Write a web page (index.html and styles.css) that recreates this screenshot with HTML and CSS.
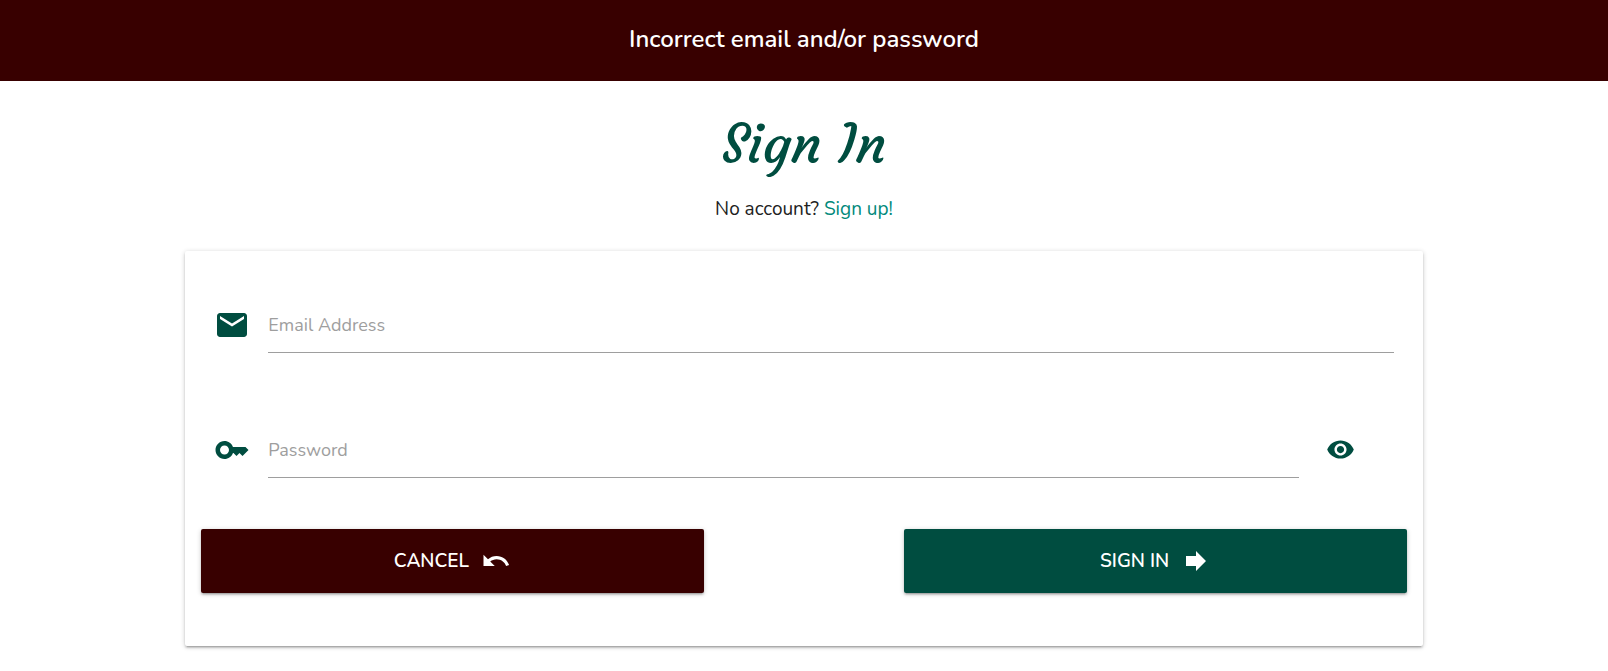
FILE: index.html
```html
<!DOCTYPE html>
<html lang="en">
<head>
<meta charset="utf-8">
<meta name="viewport" content="width=device-width, initial-scale=1">
<title>Sign In</title>
<link rel="stylesheet" href="styles.css">
</head>
<body>
<div class="alert" role="alert">Incorrect email and/or password</div>
<main class="container">
  <h1 class="title">Sign In</h1>
  <p class="subtitle">No account? <a class="link" href="#signup">Sign up!</a></p>
  <form class="card">
    <div class="field">
      <svg class="icon" viewBox="0 0 24 24" aria-hidden="true"><path d="M20 4H4c-1.1 0-1.99.9-1.99 2L2 18c0 1.1.9 2 2 2h16c1.1 0 2-.9 2-2V6c0-1.100-.9-2-2-2zm0 4l-8 5-8-5V6l8 5 8-5v2z"/></svg>
      <input class="input" type="email" id="email" placeholder="Email Address" aria-label="Email Address">
    </div>
    <div class="field field-password">
      <svg class="icon" viewBox="0 0 24 24" aria-hidden="true"><path d="M21 10h-8.350C11.830 7.670 9.610 6 7 6c-3.310 0-6 2.690-6 6s2.690 6 6 6c2.610 0 4.830-1.670 5.650-4H13l2 2 2-2 2 2 4-4.040L21 10zM7 15c-1.650 0-3-1.350-3-3s1.350-3 3-3 3 1.350 3 3-1.350 3-3 3z"/></svg>
      <input class="input" type="password" id="password" placeholder="Password" aria-label="Password">
      <button class="reveal" type="button" aria-label="Show password">
        <svg class="reveal-icon" viewBox="0 0 24 24" aria-hidden="true"><path d="M12 4.500C7 4.500 2.730 7.610 1 12c1.730 4.390 6 7.500 11 7.500s9.270-3.110 11-7.500c-1.730-4.390-6-7.500-11-7.500zM12 17c-2.760 0-5-2.240-5-5s2.240-5 5-5 5 2.240 5 5-2.240 5-5 5zm0-8c-1.660 0-3 1.340-3 3s1.340 3 3 3 3-1.340 3-3-1.340-3-3-3z"/></svg>
      </button>
    </div>
    <div class="actions">
      <button class="button button-cancel" type="button">CANCEL
        <svg class="button-icon" viewBox="0 0 24 24" aria-hidden="true"><path d="M12.500 8c-2.650 0-5.050.99-6.900 2.600L2 7v9h9l-3.620-3.620c1.390-1.160 3.160-1.880 5.120-1.880 3.540 0 6.550 2.310 7.600 5.500l2.370-.78C21.080 11.030 17.150 8 12.500 8z"/></svg>
      </button>
      <button class="button button-submit" type="submit">SIGN IN
        <svg class="button-icon" viewBox="0 0 24 24" aria-hidden="true"><path d="M12 8V4l8 8-8 8v-4H4V8z"/></svg>
      </button>
    </div>
  </form>
</main>
</body>
</html>
```
FILE: styles.css
```css
*, *::before, *::after { box-sizing: border-box; }

body {
  min-height: 100vh;
  margin: 0;
  background: #fff;
  color: #212121;
  font-family: Nunito, Lato, sans-serif;
  font-size: 19px;
}

.alert {
  padding: 23px 24px 25px;
  background: #380000;
  color: #fff;
  font-size: 24px;
  font-weight: 600;
  line-height: 33px;
  text-align: center;
}

.container {
  width: 76.95%;
  margin: 0 auto;
}

.title {
  margin: 31px 0 17px;
  color: #004d40;
  font-family: Courgette, Lato, cursive;
  font-size: 54px;
  font-weight: 400;
  line-height: 64px;
  text-align: center;
}

.subtitle {
  margin: 0 0 26px;
  line-height: 32px;
  text-align: center;
}

.link {
  color: #00897b;
  text-decoration: none;
}

.card {
  padding: 49px 16px 53px;
  border-radius: 2px;
  background: #fff;
  box-shadow: 0 2px 2px 0 rgba(0, 0, 0, .14), 0 3px 1px -2px rgba(0, 0, 0, .12), 0 1px 5px 0 rgba(0, 0, 0, .2);
}

.field {
  display: flex;
  align-items: center;
  margin: 0 13px 72px;
}

.field-password { margin-bottom: 51px; }

.icon {
  flex: none;
  width: 36px;
  height: 36px;
  margin: 0 18px 4px 0;
  fill: #004d40;
}

.input {
  flex: 1;
  min-width: 0;
  height: 53px;
  padding: 0 0 3px;
  border: 0;
  border-bottom: 1px solid #9e9e9e;
  border-radius: 0;
  outline: 0;
  background: transparent;
  color: #212121;
  font: inherit;
  font-size: 18px;
}

.input::placeholder {
  color: #9e9e9e;
  opacity: 1;
}

.reveal {
  display: flex;
  margin: 0 39px 4px 27px;
  padding: 0;
  border: 0;
  background: none;
  cursor: pointer;
}

.reveal-icon {
  width: 29px;
  height: 29px;
  fill: #004d40;
}

.actions {
  display: flex;
  justify-content: space-between;
}

.button {
  display: flex;
  align-items: center;
  justify-content: center;
  gap: 12px;
  width: 41.667%;
  height: 64px;
  border: 0;
  border-radius: 2px;
  box-shadow: 0 2px 2px 0 rgba(0, 0, 0, .14), 0 3px 1px -2px rgba(0, 0, 0, .12), 0 1px 5px 0 rgba(0, 0, 0, .2);
  color: #fff;
  font: inherit;
  font-weight: 600;
  font-size: 19px;
  cursor: pointer;
}

.button-cancel { background: #380000; }
.button-submit { background: #004d40; }

.button-icon {
  width: 30px;
  height: 30px;
  fill: #fff;
}
```
